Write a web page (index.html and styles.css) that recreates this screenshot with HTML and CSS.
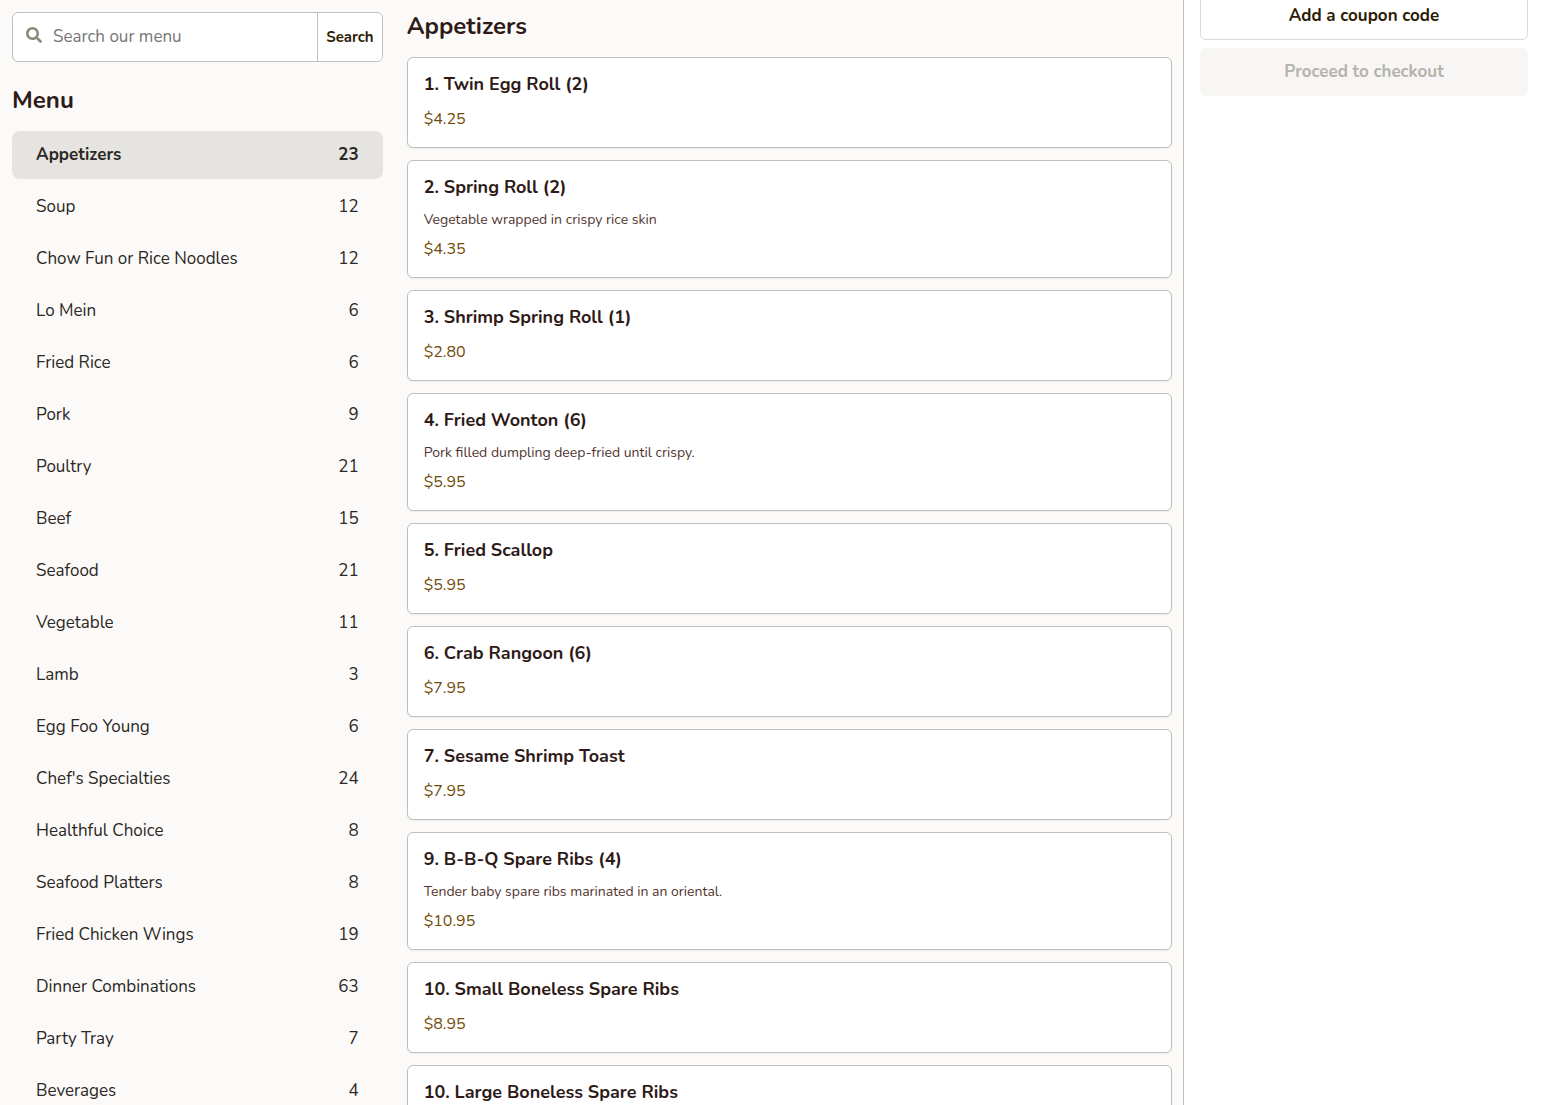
FILE: index.html
```html
<!DOCTYPE html>
<html lang="en">

<head>
  <meta charset="utf-8">
  <meta name="viewport" content="width=device-width">
  <title>Menu</title>

  <link rel="stylesheet" href="styles.css">
</head>

<body>
  <div class="app">

    <nav class="sidebar">
      <form class="search">
        <label class="search__label" for="search" aria-label="Search our menu">
          <svg class="search__icon" viewBox="0 0 512 512" aria-hidden="true">
            <path fill="currentColor" d="M505 442.700 405.300 343c-4.500-4.500-10.600-7-17-7H372c27.600-35.300 44-79.700 44-128C416 93.100 322.900 0 208 0S0 93.100 0 208s93.100 208 208 208c48.300 0 92.700-16.400 128-44v16.300c0 6.400 2.500 12.500 7 17l99.700 99.700c9.400 9.400 24.600 9.400 33.900 0l28.300-28.300c9.400-9.400 9.400-24.600.1-34zM208 336c-70.700 0-128-57.200-128-128 0-70.700 57.200-128 128-128 70.700 0 128 57.200 128 128 0 70.700-57.200 128-128 128z"/>
          </svg>
        </label>
        <input class="search__field" id="search" type="text" placeholder="Search our menu">
        <button class="search__button" type="submit">Search</button>
      </form>

      <h2 class="heading">Menu</h2>
      <ul class="menu">
        <li><a class="menu__link menu__link--active" href="#appetizers"><span>Appetizers</span><span>23</span></a></li>
        <li><a class="menu__link" href="#"><span>Soup</span><span>12</span></a></li>
        <li><a class="menu__link" href="#"><span>Chow Fun or Rice Noodles</span><span>12</span></a></li>
        <li><a class="menu__link" href="#"><span>Lo Mein</span><span>6</span></a></li>
        <li><a class="menu__link" href="#"><span>Fried Rice</span><span>6</span></a></li>
        <li><a class="menu__link" href="#"><span>Pork</span><span>9</span></a></li>
        <li><a class="menu__link" href="#"><span>Poultry</span><span>21</span></a></li>
        <li><a class="menu__link" href="#"><span>Beef</span><span>15</span></a></li>
        <li><a class="menu__link" href="#"><span>Seafood</span><span>21</span></a></li>
        <li><a class="menu__link" href="#"><span>Vegetable</span><span>11</span></a></li>
        <li><a class="menu__link" href="#"><span>Lamb</span><span>3</span></a></li>
        <li><a class="menu__link" href="#"><span>Egg Foo Young</span><span>6</span></a></li>
        <li><a class="menu__link" href="#"><span>Chef's Specialties</span><span>24</span></a></li>
        <li><a class="menu__link" href="#"><span>Healthful Choice</span><span>8</span></a></li>
        <li><a class="menu__link" href="#"><span>Seafood Platters</span><span>8</span></a></li>
        <li><a class="menu__link" href="#"><span>Fried Chicken Wings</span><span>19</span></a></li>
        <li><a class="menu__link" href="#"><span>Dinner Combinations</span><span>63</span></a></li>
        <li><a class="menu__link" href="#"><span>Party Tray</span><span>7</span></a></li>
        <li><a class="menu__link" href="#"><span>Beverages</span><span>4</span></a></li>
      </ul>
    </nav>

    <main class="items" id="appetizers">
      <h2 class="heading">Appetizers</h2>
      <div class="cards">
        <article class="card">
          <h3 class="card__title">1. Twin Egg Roll (2)</h3>
          <p class="card__price">$4.25</p>
        </article>
        <article class="card">
          <h3 class="card__title">2. Spring Roll (2)</h3>
          <p class="card__text">Vegetable wrapped in crispy rice skin</p>
          <p class="card__price">$4.35</p>
        </article>
        <article class="card">
          <h3 class="card__title">3. Shrimp Spring Roll (1)</h3>
          <p class="card__price">$2.80</p>
        </article>
        <article class="card">
          <h3 class="card__title">4. Fried Wonton (6)</h3>
          <p class="card__text">Pork filled dumpling deep-fried until crispy.</p>
          <p class="card__price">$5.95</p>
        </article>
        <article class="card">
          <h3 class="card__title">5. Fried Scallop</h3>
          <p class="card__price">$5.95</p>
        </article>
        <article class="card">
          <h3 class="card__title">6. Crab Rangoon (6)</h3>
          <p class="card__price">$7.95</p>
        </article>
        <article class="card">
          <h3 class="card__title">7. Sesame Shrimp Toast</h3>
          <p class="card__price">$7.95</p>
        </article>
        <article class="card">
          <h3 class="card__title">9. B-B-Q Spare Ribs (4)</h3>
          <p class="card__text">Tender baby spare ribs marinated in an oriental.</p>
          <p class="card__price">$10.95</p>
        </article>
        <article class="card">
          <h3 class="card__title">10. Small Boneless Spare Ribs</h3>
          <p class="card__price">$8.95</p>
        </article>
        <article class="card">
          <h3 class="card__title">10. Large Boneless Spare Ribs</h3>
        </article>
      </div>
    </main>

    <aside class="cart">
      <button class="button" type="button">Add a coupon code</button>
      <button class="button button--checkout" type="button" disabled>Proceed to checkout</button>
    </aside>

  </div>
</body>

</html>
```
FILE: styles.css
```css
:root {
  --color-border: #bfbfbb;
  --color-page: #fbfaf8;
  --color-text: #2b2724;
  --color-title: #2e1a17;
  --color-price: #6e4c08;
}

* {
  box-sizing: border-box;
}

body {
  margin: 0;
  background-color: var(--color-page);
  font-family: Nunito, Lato, 'Open Sans', sans-serif;
  font-size: 17px;
  line-height: 24px;
  color: var(--color-text);
}

button,
input {
  font: inherit;
}

.app {
  display: grid;
  grid-template-columns: minmax(0, 1fr) minmax(0, 2fr) 360px;
  height: 100vh;
  overflow: hidden;
}

.sidebar,
.items {
  padding: 12px;
}

.items {
  padding-right: 11px;
  border-right: 1px solid var(--color-border);
}

.heading {
  margin: 0;
  font-size: 24px;
  line-height: 28px;
  font-weight: 700;
  color: var(--color-title);
}

.search {
  display: flex;
  height: 50px;
  margin-bottom: 24px;
  border: 1px solid var(--color-border);
  border-radius: 6px;
  background-color: #fff;
  overflow: hidden;
}

.search__label {
  display: flex;
  padding: 14px 0 0 13px;
}

.search__icon {
  width: 16px;
  height: 16px;
  color: #8c8977;
}

.search__field {
  flex: 1;
  min-width: 0;
  padding: 0 11px;
  border: none;
  background: none;
  color: var(--color-text);
}

.search__field::placeholder {
  color: #757575;
}

.search__button {
  padding: 0 8px;
  border: none;
  border-left: 1px solid var(--color-border);
  background-color: #fff;
  font-size: 15px;
  font-weight: 700;
  color: #2c1d04;
  cursor: pointer;
}

.menu {
  display: flex;
  flex-direction: column;
  gap: 4px;
  margin: 17px 0 0;
  padding: 0;
  list-style: none;
}

.menu__link {
  display: flex;
  justify-content: space-between;
  padding: 12px 24px;
  border-radius: 8px;
  color: inherit;
  text-decoration: none;
}

.menu__link--active {
  background-color: #e5e4e0;
  font-weight: 700;
}

.cards {
  display: flex;
  flex-direction: column;
  gap: 12px;
  margin-top: 17px;
}

.card {
  padding: 14px 16px 16px;
  border: 1px solid var(--color-border);
  border-radius: 6px;
  background-color: #fff;
  box-shadow: 0 1px 2px rgba(0, 0, 0, 0.06);
}

.card__title {
  margin: 0 0 11px;
  font-size: 18px;
  line-height: 24px;
  font-weight: 700;
  color: var(--color-title);
}

.card__text {
  margin: 0 0 7px;
  font-size: 14px;
  line-height: 20px;
  color: #51342e;
}

.card__price {
  margin: 0;
  font-size: 16px;
  color: var(--color-price);
}

.cart {
  display: flex;
  flex-direction: column;
  gap: 8px;
  padding: 0 16px;
  background-color: #fff;
}

.button {
  height: 48px;
  border: 1px solid #d9d9d6;
  border-radius: 6px;
  background-color: #fff;
  font-weight: 700;
  color: #2c1d04;
  cursor: pointer;
}

.button:first-child {
  margin-top: -8px;
}

.button--checkout {
  border-color: #f7f6f4;
  background-color: #f7f6f4;
  color: #b5b3ab;
  cursor: default;
}
```
